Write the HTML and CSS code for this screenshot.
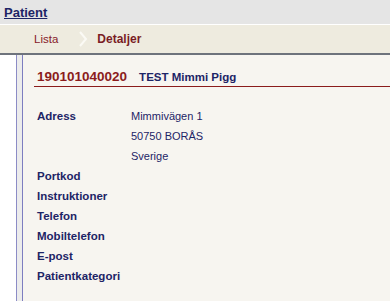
FILE: index.html
```html
<!DOCTYPE html>
<html>
<head>
	<title>Patient</title>
	<link rel="stylesheet" href="styles.css">
</head>
<body>
	<div class="topbar"><a href="#" class="top-link">Patient</a></div>
	<div class="crumbs">
		<span class="crumb">Lista</span>
		<svg class="crumb-sep" width="10" height="16" viewBox="0 0 10 16"><polyline points="2,1 8,8 2,15" fill="none" stroke="#fbfaf5" stroke-width="2"/></svg>
		<span class="crumb crumb-active">Detaljer</span>
	</div>
	<div class="layout">
		<div class="side"></div>
		<div class="gap"></div>
		<div class="main">
			<div class="heading">
				<span class="pnr">190101040020</span><span class="pname">TEST Mimmi Pigg</span>
			</div>
			<div class="details">
				<div class="lbl">Adress</div>
				<div class="val">Mimmivägen 1<br>50750 BORÅS<br>Sverige</div>
				<div class="lbl">Portkod</div>
				<div class="val"></div>
				<div class="lbl">Instruktioner</div>
				<div class="val"></div>
				<div class="lbl">Telefon</div>
				<div class="val"></div>
				<div class="lbl">Mobiltelefon</div>
				<div class="val"></div>
				<div class="lbl">E-post</div>
				<div class="val"></div>
				<div class="lbl">Patientkategori</div>
				<div class="val"></div>
			</div>
		</div>
	</div>
</body>
</html>
```
FILE: styles.css
```css
*{
	margin: 0;
	padding: 0;
	box-sizing: border-box;
}

body{
	font-family: "Liberation Sans", Arial, sans-serif;
	color: #1d2466;
	background: #fff;
}

.topbar{
	height: 25px;
	background-color: #e5e5e5;
	border-bottom: 1px solid #fff;
	padding-left: 4px;
	line-height: 23px;
}

.top-link{
	font-size: 13px;
	font-weight: bold;
	color: #1d2466;
	text-decoration: underline;
}

.crumbs{
	height: 30px;
	background-color: #eeebdf;
	border-bottom: 2px solid #6e737c;
	display: flex;
	align-items: center;
	padding-left: 34px;
}

.crumb{
	font-size: 11.5px;
	color: #86202a;
}

.crumb-active{
	font-weight: bold;
	font-size: 12px;
	color: #7a1d25;
}

.crumb-sep{
	margin: 0 9px 0 20px;
}

.layout{
	display: flex;
	height: 246px;
}

.side{
	width: 17px;
	background-color: #fff;
	border-right: 1px solid #8c8cc6;
}

.gap{
	width: 5px;
	background-color: #ececec;
}

.main{
	flex: 1;
	background-color: #f7f5f0;
	border-left: 1px solid #7d7dc0;
	padding: 11px 0 0 11px;
}

.heading{
	height: 21px;
	line-height: 20px;
	border-bottom: 1px solid #8b1c1c;
	padding-left: 3px;
	font-weight: bold;
}

.pnr{
	font-size: 13.5px;
	color: #8b1c1c;
}

.pname{
	font-size: 11.5px;
	margin-left: 12px;
	color: #1d2466;
}

.details{
	margin-top: 19px;
	padding-left: 3px;
	display: grid;
	grid-template-columns: 94px 1fr;
	line-height: 20px;
}

.lbl{
	font-size: 11.5px;
	font-weight: bold;
}

.val{
	font-size: 11px;
}
```
